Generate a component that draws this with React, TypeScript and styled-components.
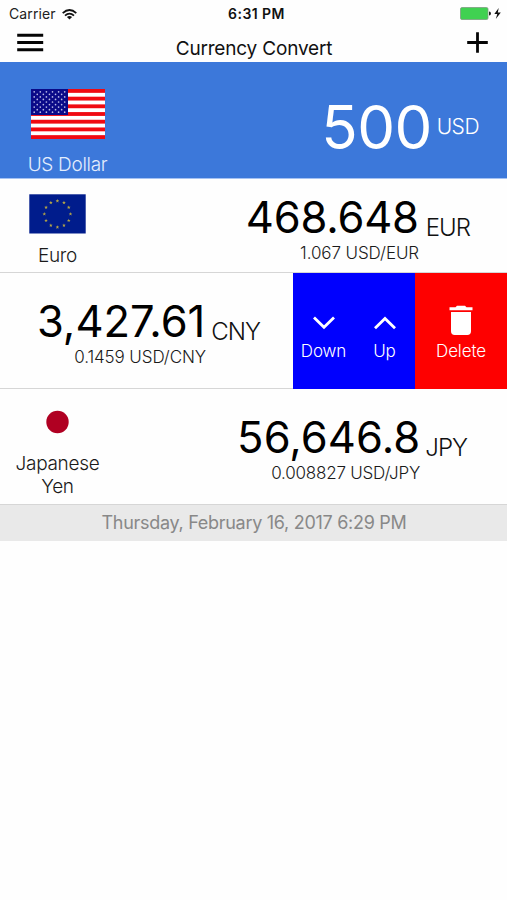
import React from "react";
import styled, { createGlobalStyle } from "styled-components";

const Global = createGlobalStyle`
  * { box-sizing: border-box; }
  body { margin: 0; background: #fefefe; font-family: Inter, "Liberation Sans", sans-serif; color: #111; }
  svg { display: block; }
`;

const Screen = styled.main`
  width: 507px;
  height: 900px;
  display: flex;
  flex-direction: column;
  overflow: hidden;
`;

const StatusBar = styled.div`
  height: 28px;
  display: grid;
  grid-template-columns: 1fr auto 1fr;
  align-items: center;
  padding: 0 6px 0 9px;
  font-size: 14px;
  line-height: 28px;
`;

const Carrier = styled.div`
  display: flex;
  align-items: center;
  gap: 6px;
  letter-spacing: 0.1px;
  color: #222;
`;

const Clock = styled.div`
  padding-left: 3px;
  font-weight: 600;
  font-size: 14px;
  letter-spacing: 0.45px;
`;

const Power = styled.div`
  display: flex;
  justify-content: flex-end;
  padding-bottom: 1px;
`;

const NavBar = styled.header`
  height: 34px;
  display: flex;
  justify-content: space-between;
  padding: 0 19px 0 17px;
`;

const NavButton = styled.button`
  border: 0;
  padding: 4px 0 0;
  background: none;
  display: flex;
  align-items: flex-start;
`;

const Title = styled.h1`
  margin: 0;
  padding: 7px 3px 0 0;
  font-size: 19px;
  line-height: 28px;
  font-weight: 400;
  letter-spacing: -0.18px;
`;

const Row = styled.section<{ $height: number; $active?: boolean }>`
  height: ${(p) => p.$height}px;
  display: flex;
  justify-content: space-between;
  background: ${(p) => (p.$active ? "#3c78da" : "#fefefe")};
  color: ${(p) => (p.$active ? "#fff" : "#111")};
  border-bottom: 1px solid ${(p) => (p.$active ? "#a5c2f3" : "#d6d6d6")};
`;

const Country = styled.div<{ $width: number; $top: number; $gap: number }>`
  width: ${(p) => p.$width}px;
  padding-top: ${(p) => p.$top}px;
  display: flex;
  flex-direction: column;
  align-items: center;
  gap: ${(p) => p.$gap}px;
`;

const CountryName = styled.div<{ $light?: boolean }>`
  width: 100px;
  text-align: center;
  font-size: 19px;
  line-height: 23px;
  font-weight: 300;
  letter-spacing: -0.3px;
  color: ${(p) => (p.$light ? "#e3edfd" : "#1a1a1a")};
`;

const Values = styled.div<{ $top: number; $right: number }>`
  display: flex;
  flex-direction: column;
  align-items: flex-end;
  padding: ${(p) => p.$top}px ${(p) => p.$right}px 0 0;
`;

const AmountLine = styled.div<{ $gap: number }>`
  display: flex;
  gap: ${(p) => p.$gap}px;
  height: 49px;
`;

const Amount = styled.div<{ $size?: number; $spacing?: number }>`
  padding-top: ${(p) => (p.$size ? 0 : 1)}px;
  font-size: ${(p) => p.$size ?? 43.5}px;
  line-height: 48px;
  letter-spacing: ${(p) => p.$spacing ?? 0}px;
  color: ${(p) => (p.$size ? "#fff" : "#000")};
  white-space: nowrap;
`;

const Code = styled.div<{ $top?: number; $size?: number }>`
  padding-top: ${(p) => p.$top ?? 0}px;
  font-size: ${(p) => p.$size ?? 24}px;
  line-height: 48px;
  font-weight: 300;
  letter-spacing: ${(p) => (p.$size ? -0.5 : -1)}px;
`;

const Rate = styled.div<{ $right: number; $spacing?: number }>`
  font-size: 17px;
  line-height: 24px;
  font-weight: 300;
  letter-spacing: ${(p) => p.$spacing ?? -0.1}px;
  color: #1a1a1a;
  padding-right: ${(p) => p.$right}px;
  white-space: nowrap;
`;

const SwipedContent = styled.div`
  width: 293px;
  display: flex;
  justify-content: flex-end;
`;

const Actions = styled.div`
  display: flex;
`;

const Action = styled.button<{ $width: number; $color: string }>`
  width: ${(p) => p.$width}px;
  height: 116px;
  margin-bottom: -1px;
  border: 0;
  padding: 32px 0 0;
  background: ${(p) => p.$color};
  color: #fff;
  font: 300 17px/22px Inter, sans-serif;
  letter-spacing: -0.15px;
  display: flex;
  flex-direction: column;
  align-items: center;
  gap: 3px;
`;

const Updated = styled.footer`
  height: 36px;
  padding-left: 1px;
  background: #e9e9e9;
  color: #888;
  text-align: center;
  font-size: 18px;
  line-height: 35px;
  font-weight: 400;
  letter-spacing: -0.29px;
`;

const WifiIcon = () => (
  <svg width="15" height="11" viewBox="0 0 15 11" fill="none" stroke="#111" strokeWidth="1.8">
    <path d="M.7 4.1Q7.5-2 14.3 4.1M3 6.6Q7.5 2.6 12 6.6" />
    <path d="M7.5 10.6 4.9 8.1Q7.5 6 10.1 8.1Z" fill="#111" stroke="none" />
  </svg>
);

const BatteryIcon = () => (
  <svg width="41" height="13" viewBox="0 0 41 13">
    <rect x=".5" y=".5" width="27.5" height="12" rx="1.5" fill="#40d151" stroke="#7d9c80" strokeWidth=".8" />
    <path d="M29 4.5q2 .2 2 2t-2 2z" fill="#222" />
    <path d="M38.7 1 34.3 7.1h3L35.8 12l5-6.6h-3z" fill="#111" />
  </svg>
);

const MenuIcon = () => (
  <svg width="27" height="20" viewBox="0 0 27 20" stroke="#050505" strokeWidth="3">
    <path d="M.2 3.2h26M.2 10.5h26M.2 17.7h26" />
  </svg>
);

const PlusIcon = () => (
  <svg width="21" height="21" viewBox="0 0 21 21" stroke="#050505" strokeWidth="2.8">
    <path d="M.2 10.5h20.6M10.5.2v20.6" />
  </svg>
);

const UsFlag = () => (
  <svg width="74" height="50" viewBox="0 0 74 50">
    <rect width="74" height="50" fill="#fff" />
    {Array.from({ length: 7 }, (_, i) => (
      <rect key={i} y={(i * 100) / 13} width="74" height={50 / 13} fill="#f00a12" />
    ))}
    <rect width="37" height="26" fill="#0a0a88" />
    {Array.from({ length: 9 }, (_, r) =>
      Array.from({ length: r % 2 ? 5 : 6 }, (_, c) => (
        <circle key={`${r}-${c}`} cx={3.2 + c * 6.1 + (r % 2 ? 3.05 : 0)} cy={2.8 + r * 2.55} r=".85" fill="#b9b9e6" />
      ))
    )}
  </svg>
);

const STAR = "0,-1.9 .5,-.6 1.8,-.6 .8,.25 1.15,1.55 0,.8 -1.15,1.55 -.8,.25 -1.8,-.6 -.5,-.6";

const EuFlag = () => (
  <svg width="57" height="40" viewBox="0 0 57 40">
    <rect x=".3" y=".3" width="56.4" height="39.2" fill="#001c8c" />
    {Array.from({ length: 12 }, (_, i) => {
      const a = (i * Math.PI) / 6;
      return (
        <polygon
          key={i}
          points={STAR}
          fill="#b5a545"
          transform={`translate(${28.4 + 13.1 * Math.sin(a)} ${20 - 13.1 * Math.cos(a)})`}
        />
      );
    })}
  </svg>
);

const JapanFlag = () => (
  <svg width="57" height="38" viewBox="0 0 57 38">
    <circle cx="28.5" cy="19" r="11.2" fill="#b00022" />
  </svg>
);

const Chevron = ({ up = false }: { up?: boolean }) => (
  <svg width="26" height="32" viewBox="0 0 26 32" fill="none" stroke="#fff" strokeWidth="2.8">
    <path d={up ? "M3 23.2 13 13.4 23 23.2" : "M3 12.4 13 22.2 23 12.4"} />
  </svg>
);

const TrashIcon = () => (
  <svg width="26" height="32" viewBox="0 0 26 32" fill="#fff">
    <path d="M1.5 2.2H7.5L9 .8h8l1.5 1.4h6v3.1h-23zM3 6.9h20v19.4q0 3.7-3.7 3.7H6.7Q3 30 3 26.3z" />
  </svg>
);

export default function App() {
  return (
    <Screen>
      <Global />
      <StatusBar>
        <Carrier>Carrier <WifiIcon /></Carrier>
        <Clock>6:31 PM</Clock>
        <Power><BatteryIcon /></Power>
      </StatusBar>
      <NavBar>
        <NavButton aria-label="Menu"><MenuIcon /></NavButton>
        <Title>Currency Convert</Title>
        <NavButton aria-label="Add currency"><PlusIcon /></NavButton>
      </NavBar>

      <Row $height={117} $active>
        <Country $width={135} $top={27} $gap={14}>
          <UsFlag />
          <CountryName $light>US Dollar</CountryName>
        </Country>
        <Values $top={41} $right={28}>
          <AmountLine $gap={5}>
            <Amount $size={60} $spacing={-0.6}>500</Amount>
            <Code $size={21}>USD</Code>
          </AmountLine>
        </Values>
      </Row>

      <Row $height={94}>
        <Country $width={115} $top={15} $gap={10}>
          <EuFlag />
          <CountryName>Euro</CountryName>
        </Country>
        <Values $top={13} $right={37}>
          <AmountLine $gap={7}>
            <Amount $spacing={-0.2}>468.648</Amount>
            <Code $top={12}>EUR</Code>
          </AmountLine>
          <Rate $right={51}>1.067 USD/EUR</Rate>
        </Values>
      </Row>

      <Row $height={116}>
        <SwipedContent>
          <Values $top={23} $right={33}>
            <AmountLine $gap={6}>
              <Amount>3,427.61</Amount>
              <Code $top={12}>CNY</Code>
            </AmountLine>
            <Rate $right={54}>0.1459 USD/CNY</Rate>
          </Values>
        </SwipedContent>
        <Actions>
          <Action $width={61} $color="#0000fe"><Chevron />Down</Action>
          <Action $width={61} $color="#0000fe"><Chevron up />Up</Action>
          <Action $width={92} $color="#fe0000"><TrashIcon />Delete</Action>
        </Actions>
      </Row>

      <Row $height={116}>
        <Country $width={115} $top={14} $gap={11}>
          <JapanFlag />
          <CountryName>Japanese Yen</CountryName>
        </Country>
        <Values $top={23} $right={40}>
          <AmountLine $gap={5}>
            <Amount $spacing={0.1}>56,646.8</Amount>
            <Code $top={12}>JPY</Code>
          </AmountLine>
          <Rate $right={47} $spacing={-0.22}>0.008827 USD/JPY</Rate>
        </Values>
      </Row>
      <Updated>Thursday, February 16, 2017 6:29 PM</Updated>
    </Screen>
  );
}
